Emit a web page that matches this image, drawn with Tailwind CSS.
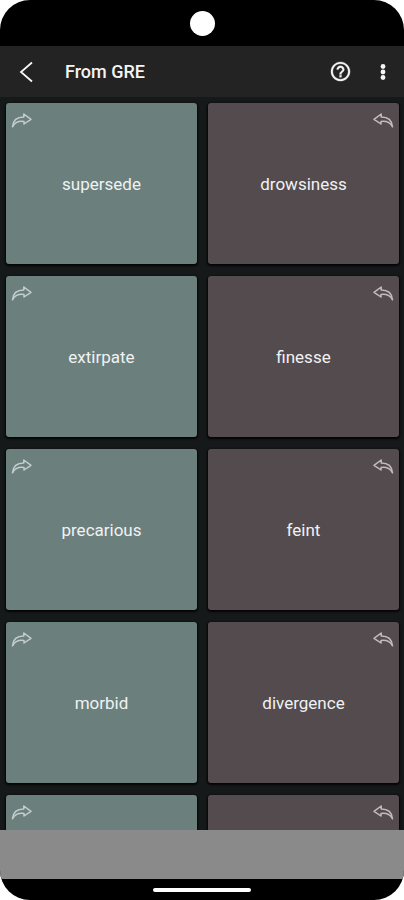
<!DOCTYPE html>
<html lang="en">
<head>
<meta charset="utf-8">
<meta name="viewport" content="width=device-width, initial-scale=1">
<title>From GRE</title>
<script src="https://cdn.jsdelivr.net/npm/@tailwindcss/browser@4"></script>
</head>
<body class="bg-white font-['Roboto',sans-serif]">
<svg class="hidden" aria-hidden="true">
  <symbol id="forward" viewBox="0 0 22 18">
    <path d="M1.500 15.800C2 9.800 6 6 12.800 6V3L20 8.300 13 13V10.500C7.500 9.800 3.800 11.500 1.500 15.800Z" fill="none" stroke="currentColor" stroke-width="1.500" stroke-linejoin="round"/>
  </symbol>
</svg>
<div class="flex h-screen flex-col overflow-hidden rounded-[30px] bg-black">
  <div class="flex h-[46px] shrink-0 items-center justify-center">
    <span class="size-[25px] rounded-full bg-white"></span>
  </div>
  <header class="flex h-[51px] shrink-0 items-center bg-[#232323] pr-[7px] pl-3 text-[#f4f4f4]">
    <button type="button" aria-label="Back" class="flex size-7 items-center justify-center">
      <svg class="h-6 w-4" viewBox="0 0 16 24" fill="none" stroke="currentColor" stroke-width="1.800"><path d="M14 2.500L3 12l11 9.500"/></svg>
    </button>
    <h1 class="ml-[25px] flex-1 text-[18px] font-medium">From GRE</h1>
    <button type="button" aria-label="Help" class="flex size-7 items-center justify-center">
      <svg class="size-[23px]" viewBox="0 0 24 24" fill="currentColor" stroke="currentColor" stroke-width=".3"><path d="M11 18h2v-2h-2v2zm1-16C6.480 2 2 6.480 2 12s4.480 10 10 10 10-4.480 10-10S17.520 2 12 2zm0 18c-4.410 0-8-3.590-8-8s3.590-8 8-8 8 3.590 8 8-3.590 8-8 8zm0-14c-2.210 0-4 1.790-4 4h2c0-1.100.9-2 2-2s2 .9 2 2c0 2-3 1.750-3 5h2c0-2.250 3-2.500 3-5 0-2.210-1.790-4-4-4z"/></svg>
    </button>
    <button type="button" aria-label="More options" class="ml-[15px] flex size-7 items-center justify-center">
      <svg class="size-6" viewBox="0 0 24 24" fill="currentColor"><circle cx="12" cy="6.500" r="2.400"/><circle cx="12" cy="12" r="2.400"/><circle cx="12" cy="17.500" r="2.400"/></svg>
    </button>
  </header>
  <main class="min-h-0 flex-1 overflow-hidden bg-[#16191a] pt-[6px] pr-[5px] pl-[6px] text-[17px] text-[#f0f2f2]">
    <div class="grid auto-rows-[161px] grid-cols-2 gap-x-[11px] gap-y-3">
      <button type="button" class="relative rounded-[3px] bg-[#6b7f7d] pt-[2px] shadow-[0_1px_2px_1px_#050505]"><svg class="absolute top-2 left-[5px] h-[18px] w-[22px] text-[#c3cecd]" aria-hidden="true"><use href="#forward"/></svg>supersede</button>
      <button type="button" class="relative rounded-[3px] bg-[#544b4f] pt-[2px] shadow-[0_1px_2px_1px_#050505]"><svg class="absolute top-2 right-[5px] h-[18px] w-[22px] -scale-x-100 text-[#c2bcc0]" aria-hidden="true"><use href="#forward"/></svg>drowsiness</button>
      <button type="button" class="relative rounded-[3px] bg-[#6b7f7d] pt-[2px] shadow-[0_1px_2px_1px_#050505]"><svg class="absolute top-2 left-[5px] h-[18px] w-[22px] text-[#c3cecd]" aria-hidden="true"><use href="#forward"/></svg>extirpate</button>
      <button type="button" class="relative rounded-[3px] bg-[#544b4f] pt-[2px] shadow-[0_1px_2px_1px_#050505]"><svg class="absolute top-2 right-[5px] h-[18px] w-[22px] -scale-x-100 text-[#c2bcc0]" aria-hidden="true"><use href="#forward"/></svg>finesse</button>
      <button type="button" class="relative rounded-[3px] bg-[#6b7f7d] pt-[2px] shadow-[0_1px_2px_1px_#050505]"><svg class="absolute top-2 left-[5px] h-[18px] w-[22px] text-[#c3cecd]" aria-hidden="true"><use href="#forward"/></svg>precarious</button>
      <button type="button" class="relative rounded-[3px] bg-[#544b4f] pt-[2px] shadow-[0_1px_2px_1px_#050505]"><svg class="absolute top-2 right-[5px] h-[18px] w-[22px] -scale-x-100 text-[#c2bcc0]" aria-hidden="true"><use href="#forward"/></svg>feint</button>
      <button type="button" class="relative rounded-[3px] bg-[#6b7f7d] pt-[2px] shadow-[0_1px_2px_1px_#050505]"><svg class="absolute top-2 left-[5px] h-[18px] w-[22px] text-[#c3cecd]" aria-hidden="true"><use href="#forward"/></svg>morbid</button>
      <button type="button" class="relative rounded-[3px] bg-[#544b4f] pt-[2px] shadow-[0_1px_2px_1px_#050505]"><svg class="absolute top-2 right-[5px] h-[18px] w-[22px] -scale-x-100 text-[#c2bcc0]" aria-hidden="true"><use href="#forward"/></svg>divergence</button>
      <button type="button" aria-label="Next word" class="relative rounded-[3px] bg-[#6b7f7d] shadow-[0_1px_2px_1px_#050505]"><svg class="absolute top-2 left-[5px] h-[18px] w-[22px] text-[#c3cecd]" aria-hidden="true"><use href="#forward"/></svg></button>
      <button type="button" aria-label="Next match" class="relative rounded-[3px] bg-[#544b4f] shadow-[0_1px_2px_1px_#050505]"><svg class="absolute top-2 right-[5px] h-[18px] w-[22px] -scale-x-100 text-[#c2bcc0]" aria-hidden="true"><use href="#forward"/></svg></button>
    </div>
  </main>
  <div class="h-[49px] shrink-0 bg-[#8a8a8a]"></div>
  <footer class="flex h-[21px] shrink-0 items-center justify-center">
    <span class="h-1 w-[98px] rounded-full bg-white"></span>
  </footer>
</div>
</body>
</html>
